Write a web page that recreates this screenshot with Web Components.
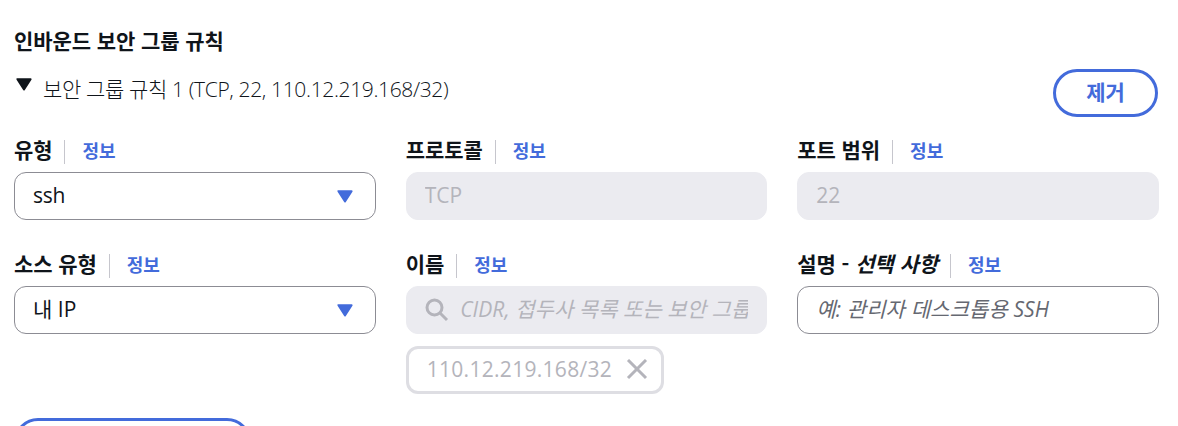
<!DOCTYPE html>
<html lang="ko">
<head>
<meta charset="utf-8">
<title>인바운드 보안 그룹 규칙</title>
<style>
html, body { margin: 0; height: 426px; overflow: hidden; background: #fff; }
body { font: 21px/30px "Open Sans", "Noto Sans CJK KR", sans-serif; color: #0f141a; }
</style>
</head>
<body>
<rule-editor></rule-editor>
<script>
const define = (name, html) => customElements.define(name, class extends HTMLElement {
  constructor() {
    super();
    this.attachShadow({ mode: 'open' }).innerHTML = html;
  }
});

define('form-label', `<style>
:host { display: flex; align-items: flex-start; height: 24px; margin-bottom: 8px; white-space: nowrap; }
b { font: 700 21px/19px "Noto Sans CJK KR", sans-serif; letter-spacing: -0.08px; }
a { height: 24px; margin-left: 12px; padding-left: 17px; border-left: 1px solid #c6c6cd; color: #436bdb; font: 700 18px/21px "Noto Sans CJK KR", sans-serif; }
</style><b><slot></slot></b><a>정보</a>`);

define('text-box', `<style>
:host { display: flex; align-items: center; box-sizing: border-box; height: 48px; border: 1px solid #8c8c94; border-radius: 12px; padding: 0 18px; white-space: nowrap; overflow: hidden; }
:host([disabled]) { background: #ebebf0; border-color: #ebebf0; color: #b4b4bb; }
:host([placeholder]) { font-style: italic; letter-spacing: 0.05px; }
:host([placeholder]:not([disabled])) { color: #656871; letter-spacing: 0.12px; }
span { flex: 1; min-width: 0; overflow: hidden; line-height: 32px; padding-bottom: 2px; }
</style><slot name="icon"></slot><span><slot></slot></span>`);

define('select-box', `<style>
:host { display: flex; align-items: center; justify-content: space-between; box-sizing: border-box; height: 48px; border: 1px solid #8c8c94; border-radius: 12px; padding: 0 22px 0 18px; letter-spacing: -0.3px; }
:host([wide]) { letter-spacing: 0; }
span { padding-bottom: 2px; }
svg { display: block; }
</style><span><slot></slot></span><svg width="16" height="13" viewBox="0 0 16 13"><path d="M1.4 1.2H14.6L8 11.5Z" fill="#436bdb" stroke="#436bdb" stroke-width="2" stroke-linejoin="round"/></svg>`);

define('value-token', `<style>
:host { display: flex; align-items: center; box-sizing: border-box; width: 258px; height: 48px; margin-top: 12px; border: 3px solid #dedee3; border-radius: 12px; padding: 0 13px 0 18px; color: #b4b4bb; justify-content: space-between; letter-spacing: 0.3px; }
span { padding-bottom: 2px; }
</style><span><slot></slot></span><svg width="22" height="22" viewBox="0 0 22 22"><path d="M2 1L20 19M20 1L2 19" fill="none" stroke="#b4b4bb" stroke-width="3"/></svg>`);

define('pill-button', `<style>
:host { display: block; box-sizing: border-box; height: 48px; border: 3px solid #436bdb; border-radius: 24px; color: #436bdb; text-align: center; font: 700 21px/39px "Noto Sans CJK KR", sans-serif; }
</style><slot></slot>`);

define('rule-editor', `<style>
:host { display: block; box-sizing: border-box; height: 426px; overflow: hidden; padding: 25px 19px 0 14px; }
h3 { margin: 0 0 1px; font: 700 21px/30px "Noto Sans CJK KR", sans-serif; letter-spacing: -0.08px; }
header { display: flex; align-items: flex-start; height: 84px; }
.tri { margin: 22px 11px 0 2px; flex: none; }
.summary { flex: 1; margin-top: 18px; font: 300 21px/30px "Open Sans", "Noto Sans CJK KR", sans-serif; letter-spacing: -0.36px; }
.remove { width: 105px; margin: 13px 1px 0 0; }
.grid { display: grid; grid-template-columns: repeat(3, minmax(0, 1fr)); column-gap: 30px; row-gap: 34px; }
.add { width: 237px; margin-top: 24px; }
.search { margin-right: 11.5px; flex: none; }
</style>
<h3>인바운드 보안 그룹 규칙</h3>
<header>
<svg class="tri" width="16" height="13" viewBox="0 0 16 13"><path d="M1.4 1.2H14.6L8 11.5Z" fill="#0f141a" stroke="#0f141a" stroke-width="2" stroke-linejoin="round"/></svg>
<div class="summary">보안 그룹 규칙 1 (TCP, 22, 110.12.219.168/32)</div>
<pill-button class="remove">제거</pill-button>
</header>
<div class="grid">
<div><form-label>유형</form-label><select-box>ssh</select-box></div>
<div><form-label>프로토콜</form-label><text-box disabled>TCP</text-box></div>
<div><form-label>포트 범위</form-label><text-box disabled>22</text-box></div>
<div><form-label>소스 유형</form-label><select-box wide>내 IP</select-box></div>
<div><form-label>이름</form-label><text-box disabled placeholder><svg slot="icon" class="search" width="24" height="24" viewBox="0 0 24 24"><circle cx="9.5" cy="9.5" r="7.5" fill="none" stroke="#b4b4bb" stroke-width="3"/><path d="M15 15L22 22" stroke="#b4b4bb" stroke-width="3"/></svg>CIDR, 접두사 목록 또는 보안 그룹</text-box><value-token>110.12.219.168/32</value-token></div>
<div><form-label>설명 - <i>선택 사항</i></form-label><text-box placeholder>예: 관리자 데스크톱용 SSH</text-box></div>
</div>
<pill-button class="add"></pill-button>`);
</script>
</body>
</html>
